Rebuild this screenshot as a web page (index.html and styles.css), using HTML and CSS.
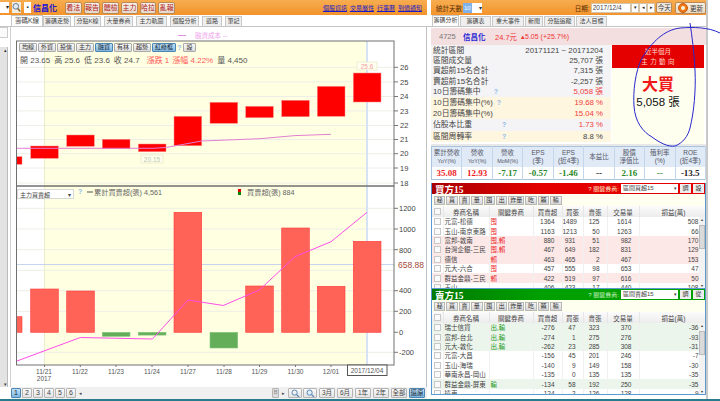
FILE: index.html
```html
<!DOCTYPE html>
<html lang="zh-Hant">
<head>
<meta charset="utf-8">
<title>信昌化 籌碼K線</title>
<link rel="stylesheet" href="styles.css">
</head>
<body>
<div class="page">
  <div class="columns">
    <section class="left">
      <header class="topbar">
        <div class="top-search">
          <span class="stub">▾</span>
          <svg class="search-icon" width="9" height="10" viewBox="0 0 9 10"><circle cx="3.8" cy="3.8" r="2.8" fill="#dfeaf7" stroke="#6b7d92"/><path d="M5.8 6l2.4 3" stroke="#8a6a2a" stroke-width="1.5"/></svg>
          <span class="stub stub-dot">▪</span>
        </div>
        <b class="stock-name">信昌化</b>
        <nav class="top-btns">
          <span class="top-btn">看法</span><span class="top-btn">報告</span><span class="top-btn">體檢</span><span class="top-btn">主力</span><span class="top-btn">哈拉</span><span class="top-btn">亂報</span>
        </nav>
        <nav class="top-links">
          <a>個股資訊</a><a>交易屬性</a><a>行事曆</a><a>到價通知</a>
        </nav>
      </header>
      <div class="tabs tabs-left">
        <span class="tab active">籌碼K線</span><span class="tab">籌碼走勢</span><span class="tab">分點K線</span><span class="tab">大量券商</span><span class="tab">主力軌圖</span><span class="tab">個股分析</span><span class="tab">道路</span><span class="tab">筆記</span>
      </div>
      <div class="work">
        <aside class="strip">
          <span class="strip-box"></span>
          <span class="strip-bar"><i>▴</i><i>▾</i></span>
        </aside>
        <div class="canvas">
          <svg class="chart" width="416" height="356" viewBox="11 27 416 356">
            <rect x="16.5" y="41" width="377.5" height="324" fill="#fff"/>
            <rect x="44.5" y="41" width="322.5" height="324" fill="#ffffe2"/>
            <g class="grid">
              <path d="M17 67.3H394M17 81.9H394M17 96.5H394M17 110.9H394M17 125.5H394M17 139.5H394M17 153.7H394M17 168H394M17 183H394"/>
              <path d="M17 208.3H394M17 229H394M17 249.7H394M17 270.3H394M17 290.7H394M17 311.3H394M17 352.3H394"/>
            </g>
            <path d="M44.5 41V365" stroke="#e9efc8" fill="none"/>
            <path d="M367 41V365" stroke="#d5e3f4" stroke-width="2" fill="none"/>
            <path d="M17 264.5H394" stroke="#c6d5ec" fill="none"/>

            <g class="candles">
              <rect x="16.7" y="156.7" width="5.3" height="7.6"/>
              <rect x="30.7" y="146" width="27.6" height="12.3"/>
              <rect x="66.7" y="135" width="27.6" height="11.3"/>
              <rect x="102.3" y="139.3" width="27.7" height="9.4"/>
              <rect x="138.3" y="144" width="27.7" height="7.7"/>
              <rect x="174" y="116.3" width="27.7" height="29.4"/>
              <rect x="210" y="102.3" width="27.7" height="21"/>
              <rect x="245.7" y="106.3" width="27.6" height="11.4"/>
              <rect x="281.7" y="100.3" width="27.6" height="16.4"/>
              <rect x="317.3" y="86.3" width="27.7" height="30"/>
              <rect x="353.3" y="73" width="27.7" height="29"/>
            </g>
            <polyline class="ma" points="17,148.3 153,148.3 166,147.5 201.7,141 260,138.7 295,135.6 331,134.3"/>

            <g class="tip">
              <rect x="357" y="62" width="20" height="8"/>
              <text x="367" y="68.6">25.6</text>
              <rect x="141" y="155" width="22" height="8"/>
              <text x="152" y="161.6" class="tip-green">20.15</text>
            </g>

            <g class="bars-up">
              <rect x="16.7" y="316.7" width="5.3" height="15.6"/>
              <rect x="30.7" y="289" width="27.6" height="43.3"/>
              <rect x="66.7" y="291" width="27.6" height="41.3"/>
              <rect x="174" y="212.3" width="27.7" height="120"/>
              <rect x="245.7" y="286" width="27.6" height="46.3"/>
              <rect x="281.7" y="228" width="27.6" height="104.3"/>
              <rect x="317.3" y="286.3" width="27.7" height="46"/>
              <rect x="353.3" y="241.3" width="27.7" height="91"/>
            </g>
            <g class="bars-down">
              <rect x="102.3" y="332.3" width="27.7" height="4"/>
              <rect x="138.3" y="332.3" width="27.7" height="2.8"/>
              <rect x="210" y="332.3" width="27.7" height="15.7"/>
            </g>
            <polyline class="cum" points="17,361 80.3,337.5 152.5,339 188,300 223.3,305.5 259.3,290 295,256.7 331,241.7 367,212.3"/>

            <rect x="16.5" y="41" width="377.5" height="145" class="frame"/>
            <rect x="16.5" y="186" width="377.5" height="179" class="frame"/>

            <g class="ticks">
              <path d="M394 67.3h4M394 81.9h4M394 96.5h4M394 110.9h4M394 125.5h4M394 139.5h4M394 153.7h4M394 168h4M394 183h4"/>
              <path d="M394 208.3h4M394 229h4M394 249.7h4M394 290.7h4M394 311.3h4M394 332.3h4M394 352.3h4"/>
              <path d="M44.5 365v2M80.3 365v2M116 365v2M152 365v2M188 365v2M224 365v2M259.5 365v2M295.5 365v2M331 365v2"/>
            </g>
            <g class="axis">
              <text x="400" y="70">26</text><text x="400" y="84.6">25</text><text x="400" y="99">24</text><text x="400" y="113.6">23</text><text x="400" y="128">22</text><text x="400" y="142">21</text><text x="400" y="156.4">20</text><text x="400" y="170.8">19</text><text x="400" y="185.6">18</text>
              <text x="399" y="211">1200</text><text x="399" y="231.8">1000</text><text x="399" y="252.5">800</text><text x="399" y="293.4">400</text><text x="399" y="314">200</text><text x="399" y="335">0</text><text x="399" y="355">-200</text>
              <text x="398" y="268" class="price">658.88</text>
            </g>
            <g class="xaxis">
              <text x="44" y="373.5">11/21</text><text x="44" y="380.5">2017</text>
              <text x="80" y="373.5">11/22</text><text x="116" y="373.5">11/23</text><text x="152" y="373.5">11/24</text><text x="188" y="373.5">11/27</text><text x="224" y="373.5">11/28</text><text x="259.5" y="373.5">11/29</text><text x="295.5" y="373.5">11/30</text><text x="331" y="373.5">12/01</text>
            </g>
            <rect x="347.5" y="365" width="39.5" height="10.5" fill="#fff" stroke="#555"/>
            <text x="367" y="373.2" class="x-date">2017/12/04</text>

            <g class="legend">
              <path d="M178 35.5h8" stroke="#e58be0"/>
              <text x="195" y="38" class="legend-ma">融資成本 --</text>
              <path d="M87 192h6" stroke="#555"/>
              <text x="94" y="195">累計買賣超(張) 4,561</text>
              <rect x="238" y="189" width="3" height="3" fill="#d00"/>
              <rect x="238" y="192" width="3" height="3" fill="#080"/>
              <text x="247" y="195">買賣超(張) 884</text>
            </g>
          </svg>

          <div class="chart-tools">
            <span class="cbtn">均線</span><span class="cbtn">外資</span><span class="cbtn">投信</span><span class="cbtn">主力</span><span class="cbtn on">融資</span><span class="cbtn">有林</span><span class="cbtn">趨勢</span><span class="cbtn on wide">紅綠框</span><i class="help">?</i><span class="cbtn">設</span>
          </div>
          <div class="ohlc">
            <span>開 23.65</span><span>高 25.6</span><span>低 23.6</span><span>收 24.7</span><em>漲跌 1</em><em>漲幅 4.22%</em><span>量 4,450</span>
          </div>
          <div class="chart-select"><span>主力買賣超</span><i>▾</i></div>
          <i class="help help-low">?</i>
        </div>
      </div>
      <footer class="pager">
        <div class="pages">
          <span class="pbtn on">1</span><span class="pbtn">2</span><span class="pbtn">3</span><span class="pbtn">4</span><span class="pbtn">5</span><span class="pbtn">6</span><i class="pmore">◂</i>
        </div>
        <div class="ranges">
          <span class="pbtn small">日</span><i class="pmore">▸</i>
          <span class="pbtn icon"><svg width="9" height="9" viewBox="0 0 9 9"><circle cx="3.6" cy="3.6" r="2.6" fill="none" stroke="#5a88b8"/><path d="M5.6 5.6L8 8" stroke="#5a88b8" stroke-width="1.3"/></svg></span>
          <span class="pbtn icon"><svg width="9" height="9" viewBox="0 0 9 9"><circle cx="3.6" cy="3.6" r="2.6" fill="#e2eefa" stroke="#5a88b8"/><path d="M5.6 5.6L8 8" stroke="#5a88b8" stroke-width="1.3"/></svg></span>
          <span class="pbtn rng">3月</span><span class="pbtn rng">6月</span><span class="pbtn rng">1年</span><span class="pbtn rng">2年</span><span class="pbtn rng">全部</span><span class="pbtn rng on">還原</span>
        </div>
      </footer>
    </section>

    <section class="right">
      <header class="topbar topbar-right">
        <span class="days">統計天數:</span>
        <span class="days-box"><b>10</b><i>▾</i></span>
        <span class="date-label">日期:</span>
        <span class="date-box">2017/12/4</span>
        <span class="date-nav">▾</span><span class="date-nav">◂</span><span class="date-nav">▸</span>
        <span class="today">今天</span>
        <span class="refresh"><svg width="10" height="10" viewBox="0 0 10 10"><circle cx="5" cy="5" r="4.5" fill="#f07a1a" stroke="#c95a08"/><circle cx="5" cy="5" r="2" fill="#fff3d8"/></svg>更新</span>
      </header>
      <div class="tabs tabs-right">
        <span class="tab active">籌碼分析</span><span class="tab">籌碼表</span><span class="tab">重大事件</span><span class="tab">新聞</span><span class="tab">分點追蹤</span><span class="tab">法人目標</span>
      </div>
      <div class="quote">
        <span class="q-code">4725</span><b class="q-name">信昌化</b><span class="q-price">24.7元</span><span class="q-change">▴5.05 (+25.7%)</span>
      </div>
      <div class="summary">
        <table class="stats">
          <tr><td>統計區間</td><td class="v">20171121 ~ 20171204</td></tr>
          <tr><td>區間成交量</td><td class="v">25,707 張</td></tr>
          <tr><td>買超前15名合計</td><td class="v">7,315 張</td></tr>
          <tr><td>賣超前15名合計</td><td class="v">-2,257 張</td></tr>
          <tr><td>10日籌碼集中<i class="help gap-a">?</i></td><td class="v red">5,058 張</td></tr>
          <tr class="cream tall"><td>10日籌碼集中(%)<i class="help gap-b">?</i></td><td class="v red">19.68 %</td></tr>
          <tr class="cream tall"><td>20日籌碼集中(%)</td><td class="v red">15.04 %</td></tr>
          <tr class="tall"><td>佔股本比重<i class="help gap-c">?</i></td><td class="v red">1.73 %</td></tr>
          <tr class="cream tall"><td>區間周轉率<i class="help gap-c">?</i></td><td class="v">8.8 %</td></tr>
        </table>
        <div class="force">
          <div class="force-head"><span>近半個月</span><span class="spaced">主 力 動 向</span></div>
          <div class="force-body"><b>大買</b><span>5,058 張</span></div>
        </div>
      </div>
      <table class="metrics">
        <tr class="m-head">
          <th>累計營收<br><small>YoY(%)</small></th><th>營收<br><small>YoY(%)</small></th><th>營收<br><small>MoM(%)</small></th><th>EPS<br>(季)</th><th>EPS<br>(近4季)</th><th>本益比</th><th>股價<br>淨值比</th><th>殖利率<br>(%)</th><th>ROE<br>(近4季)</th>
        </tr>
        <tr class="m-val">
          <td class="up">35.08</td><td class="up">12.93</td><td class="down">-7.17</td><td class="down">-0.57</td><td class="down">-1.46</td><td>--</td><td class="down">2.16</td><td class="down">--</td><td>-13.5</td>
        </tr>
      </table>

      <div class="broker buy">
        <div class="b-head">
          <b>買方15</b>
          <span class="b-ctrl"><i>?</i> 關鍵券商:</span>
          <span class="b-select">區間買超15<i>▾</i></span>
          <span class="b-btn">調</span><span class="b-btn">設</span>
        </div>
        <div class="b-tools"><span>秘</span><span>買</span><span>賣</span><span>量</span><span>囤</span><span>出</span><span class="w">炸量</span><span>吃</span><span>賴</span><span>輸</span></div>
        <table class="b-table">
          <colgroup><col class="c0"><col class="c1"><col class="c2"><col class="c3"><col class="c4"><col class="c5"><col class="c6"><col class="c7"></colgroup>
          <tr class="hd"><th><u></u></th><th>券商名稱</th><th>關鍵券商</th><th>買賣超</th><th>買張</th><th>賣張</th><th>交易量</th><th>損益(萬)</th></tr>
          <tr><td><u></u></td><td>元富-松德</td><td class="tag r">囤</td><td>1364</td><td>1489</td><td>125</td><td>1614</td><td>508</td></tr>
          <tr><td><u></u></td><td>玉山-南京東路</td><td class="tag r">囤</td><td>1163</td><td>1213</td><td>50</td><td>1263</td><td>66</td></tr>
          <tr class="pink"><td><u></u></td><td>富邦-敦南</td><td class="tag r">囤,賴</td><td>880</td><td>931</td><td>51</td><td>982</td><td>170</td></tr>
          <tr class="pink"><td><u></u></td><td>台灣企銀-三民</td><td class="tag r">囤,賴</td><td>467</td><td>649</td><td>182</td><td>831</td><td>129</td></tr>
          <tr class="pink"><td><u></u></td><td>德信</td><td class="tag r">賴</td><td>463</td><td>465</td><td>2</td><td>467</td><td>153</td></tr>
          <tr><td><u></u></td><td>元大-六合</td><td class="tag r">囤</td><td>457</td><td>555</td><td>98</td><td>653</td><td>47</td></tr>
          <tr class="pink"><td><u></u></td><td>群益金鼎-三民</td><td class="tag r">賴</td><td>422</td><td>519</td><td>97</td><td>616</td><td>50</td></tr>
          <tr><td><u></u></td><td>玉山</td><td class="tag r"></td><td>406</td><td>423</td><td>17</td><td>440</td><td>108</td></tr>
        </table>
        <span class="scroll"><i>▴</i><em></em><i>▾</i></span>
      </div>

      <div class="broker sell">
        <div class="b-head">
          <b>賣方15</b>
          <span class="b-ctrl"><i>?</i> 關鍵券商:</span>
          <span class="b-select">區間賣超15<i>▾</i></span>
          <span class="b-btn">調</span><span class="b-btn">從</span>
        </div>
        <div class="b-tools"><span>秘</span><span>買</span><span>賣</span><span>量</span><span>囤</span><span>出</span><span class="w">炸量</span><span>吃</span><span>賴</span><span>輸</span></div>
        <table class="b-table">
          <colgroup><col class="c0"><col class="c1"><col class="c2"><col class="c3"><col class="c4"><col class="c5"><col class="c6"><col class="c7"></colgroup>
          <tr class="hd"><th><u></u></th><th>券商名稱</th><th>關鍵券商</th><th>買賣超</th><th>買張</th><th>賣張</th><th>交易量</th><th>損益(萬)</th></tr>
          <tr class="mint"><td><u></u></td><td>瑞士信貸</td><td class="tag g">出,輸</td><td>-276</td><td>47</td><td>323</td><td>370</td><td>-36</td></tr>
          <tr class="mint"><td><u></u></td><td>富邦-台北</td><td class="tag g">出,輸</td><td>-274</td><td>1</td><td>275</td><td>276</td><td>-93</td></tr>
          <tr class="mint"><td><u></u></td><td>元大-敦化</td><td class="tag g">出,輸</td><td>-262</td><td>23</td><td>285</td><td>308</td><td>-31</td></tr>
          <tr><td><u></u></td><td>元富-大昌</td><td class="tag g"></td><td>-156</td><td>45</td><td>201</td><td>246</td><td>-7</td></tr>
          <tr><td><u></u></td><td>玉山-海瑞</td><td class="tag g"></td><td>-140</td><td>9</td><td>149</td><td>158</td><td>-30</td></tr>
          <tr><td><u></u></td><td>華南永昌-岡山</td><td class="tag g"></td><td>-135</td><td>0</td><td>135</td><td>135</td><td>-35</td></tr>
          <tr class="mint"><td><u></u></td><td>群益金鼎-屏東</td><td class="tag g">輸</td><td>-134</td><td>58</td><td>192</td><td>250</td><td>-35</td></tr>
          <tr><td><u></u></td><td>遠東</td><td class="tag g"></td><td>-124</td><td>2</td><td>126</td><td>128</td><td>-9</td></tr>
        </table>
        <span class="scroll"><i>▴</i><em></em><i>▾</i></span>
      </div>
    </section>
  </div>
  <div class="taskbar"></div>
  <svg class="ink" width="720" height="401" viewBox="0 0 720 401"><path d="M720 33C708 27 694 27 680 28C664 30 652 42 642 58C635 72 633 92 634 106C635 122 643 132 652 137C660 143 668 147 675 146C683 143 688 136 690 128C694 112 696 90 695 70C694 52 692 36 690 23"/></svg>
</div>
</body>
</html>
```
FILE: styles.css
```css
* { box-sizing: border-box; }
html, body { margin: 0; padding: 0; }
body {
  width: 720px; height: 401px; overflow: hidden; background: #fff; color: #444;
  font-family: "Liberation Sans", "Noto Sans CJK TC", sans-serif; font-size: 8px;
}
i, em { font-style: normal; }
.page { position: relative; width: 720px; height: 401px; display: flex; flex-direction: column; }
.columns { display: flex; height: 399px; }
.left { width: 431px; display: flex; flex-direction: column; flex: none; }
.right { width: 277px; flex: none; margin-left: 0; border-right: 2px solid #c9c9c9; display: flex; flex-direction: column; }
.taskbar { height: 2px; background: #2a7b8c; }

.topbar {
  height: 15px; flex: none; display: flex; align-items: center; width: 427px;
  background: linear-gradient(#f7ad50, #f2932c);
}
.top-search { display: flex; align-items: center; gap: 3px; width: 33px; }
.stub { width: 9px; height: 11px; background: #fff; font-size: 6px; line-height: 11px; text-align: right; color: #222; }
.search-icon { background: #f0ece2; width: 9px; height: 11px; }
.stub-dot { width: 7px; text-align: center; }
.stock-name { width: 32px; color: #1414d8; font-size: 8px; white-space: nowrap; }
.top-btns { display: flex; gap: 2px; }
.top-btn {
  width: 16.7px; height: 12px; border: 1px solid #b88a5a; border-radius: 2px; background: linear-gradient(#f6efe6, #e5dacb);
  color: #b01818; font-size: 7px; line-height: 10px; text-align: center; white-space: nowrap;
}
.top-links { margin-left: auto; margin-right: 5px; display: flex; gap: 3px; }
.top-links a { color: #1a1ac8; text-decoration: underline; font-size: 6px; white-space: nowrap; }

.tabs { height: 12px; flex: none; display: flex; align-items: flex-end; border-bottom: 1px solid #c4c4c4; }
.tab {
  height: 10px; border: 1px solid #c8c8c8; border-bottom: none; background: #efefef;
  font-size: 6px; line-height: 9px; text-align: center; color: #444; white-space: nowrap; overflow: hidden;
}
.tab.active { background: #fff; height: 11px; }
.tabs-left { padding-left: 11px; gap: 3px; }
.tabs-left .tab { width: 28px; }
.tabs-left .tab:nth-child(1) { width: 32px; font-size: 6.5px; margin-right: -3px; }
.tabs-left .tab:nth-child(3) { width: 27px; }
.tabs-left .tab:nth-child(4) { width: 29px; }
.tabs-left .tab:nth-child(5) { width: 31px; }
.tabs-left .tab:nth-child(6) { width: 29px; }
.tabs-left .tab:nth-child(7) { width: 20px; }
.tabs-left .tab:nth-child(8) { width: 17px; }
.tabs-right { padding-left: 1px; width: 100%; gap: 1px; }
.tabs-right .tab { width: 31px; }
.tabs-right .tab:nth-child(1) { width: 27px; }
.tabs-right .tab:nth-child(3) { width: 32px; }
.tabs-right .tab:nth-child(4) { width: 18px; }

.work { flex: 1; display: flex; min-height: 0; }
.strip { width: 11px; flex: none; display: flex; flex-direction: column; border-right: 1px solid #d0d0d0; background: #fff; }
.strip-box { width: 8px; height: 11px; margin-bottom: 9px; border: 1px solid #ccc; border-left: none; background: #fafafa; }
.strip-bar { flex: 1; width: 8px; background: #e3e3e3; border-right: 1px solid #bbb; display: flex; flex-direction: column; justify-content: space-between; font-size: 5px; color: #333; text-align: right; }
.canvas { position: relative; width: 416px; border-right: 1px solid #c0c0c0; }
.chart { display: block; font-family: "Liberation Sans", "Noto Sans CJK TC", sans-serif; }
.grid path { stroke: #eeeee8; fill: none; }
.frame { fill: none; stroke: #707070; }
.candles rect { fill: #fe0000; stroke: #fb8a8a; stroke-width: .5; }
.ma { fill: none; stroke: #e37fd2; stroke-width: 1; }
.cum { fill: none; stroke: #ff4de8; stroke-width: 1; }
.bars-up rect { fill: #ff6357; stroke: #ff3a3a; stroke-width: .6; }
.bars-down rect { fill: #64ae5a; stroke: #84c67c; stroke-width: .6; }
.tip rect { fill: #fffff0; stroke: #e9e5c4; stroke-width: .7; }
.tip text { font-size: 6.5px; fill: #f6a0a0; text-anchor: middle; }
.tip .tip-green { fill: #b9c8a8; }
.ticks path { stroke: #777; fill: none; }
.axis text { font-size: 7.5px; fill: #444; }
.axis .price { font-size: 8.5px; fill: #a44a3c; }
.xaxis text, .x-date { font-size: 6.5px; fill: #555; text-anchor: middle; }
.legend text { font-size: 7.2px; fill: #666; }
.legend .legend-ma { fill: #ef9fea; font-size: 6.5px; }

.chart-tools { position: absolute; left: 8px; top: 16px; display: flex; gap: 1px; align-items: center; }
.cbtn {
  width: 18px; height: 9px; border: 1px solid #aaa; border-radius: 1px; background: linear-gradient(#f9f9f9, #dcdcdc);
  font-size: 6px; line-height: 7px; text-align: center; color: #333; white-space: nowrap;
}
.cbtn.on { background: linear-gradient(#bfe0f5, #7fb7de); border-color: #4d86b4; color: #123; }
.cbtn.wide { width: 24px; }
.cbtn:last-child { width: 13px; }
.help { color: #8fb8e8; font-size: 7px; font-weight: bold; }
.chart-tools .help { width: 5px; text-align: center; }
.ohlc { position: absolute; left: 9px; top: 27px; display: flex; font-size: 8px; color: #555; white-space: nowrap; }
.ohlc span { margin-right: 4px; }
.ohlc em { color: #ff5a5a; margin-left: 3px; }
.ohlc em + span { margin-left: 4px; }
.chart-select {
  position: absolute; left: 6px; top: 162px; width: 57px; height: 10px; background: #fff; border: 1px solid #d8d8d8;
  display: flex; justify-content: space-between; align-items: center; font-size: 6px; padding: 0 2px; color: #444;
}
.chart-select i { font-size: 6px; }
.help-low { position: absolute; left: 67px; top: 161px; }

.pager { height: 12px; flex: none; margin-left: 11px; width: 416px; display: flex; justify-content: space-between; align-items: center; background: #f0f0f0; padding-right: 2px; }
.pages, .ranges { display: flex; gap: 1px; align-items: center; }
.pbtn {
  width: 10px; height: 10px; border: 1px solid #b5b5b5; border-radius: 1px; background: linear-gradient(#fafafa, #e4e4e4);
  font-size: 7px; line-height: 8px; text-align: center; color: #444; white-space: nowrap; overflow: hidden; display: block;
}
.pbtn.on { background: linear-gradient(#c2e2f7, #7db6dd); border-color: #4d86b4; color: #123; }
.pbtn.small { width: 7px; font-size: 4px; background: #ddd; }
.pbtn.icon { width: 14px; display: flex; align-items: center; justify-content: center; }
.pbtn.rng { width: 16px; font-size: 6.5px; margin-left: 1px; }
.pmore { font-size: 5px; width: 7px; text-align: center; color: #444; }

.topbar-right { width: 100%; background: linear-gradient(#f7ad50, #f2932c); padding-left: 5px; color: #55300a; font-size: 6.5px; white-space: nowrap; }
.days { width: 27px; }
.days-box { width: 19px; height: 10px; background: #fff; display: flex; justify-content: space-between; font-size: 6px; line-height: 10px; color: #333; }
.days-box b { background: #7fb2ea; color: #fff; font-weight: normal; padding: 0 1px; }
.date-label { margin-left: 93px; width: 16px; color: #5a2c00; }
.date-box { width: 41px; height: 10px; background: #fff; border: 1px solid #d6c4a8; font-size: 6.5px; line-height: 8px; padding-left: 1px; color: #444; }
.date-nav { width: 8px; height: 10px; background: #fff; border: 1px solid #d6c4a8; font-size: 4.5px; line-height: 8px; text-align: center; color: #222; }
.today { width: 16px; height: 11px; margin-left: 1px; border: 1px solid #b88a5a; border-radius: 2px; background: #efe6da; font-size: 6.5px; line-height: 9px; text-align: center; color: #444; }
.refresh { width: 31px; height: 12px; margin-left: 3px; border: 1px solid #b88a5a; border-radius: 2px; background: linear-gradient(#f6eee2, #ecd9c0); font-size: 6.5px; display: flex; align-items: center; justify-content: center; gap: 2px; color: #444; }

.quote { height: 17px; flex: none; margin-top: 1px; background: #f4dfe0; display: flex; align-items: center; padding-left: 8px; font-size: 7.5px; white-space: nowrap; }
.q-code { color: #777; width: 24px; }
.q-name { color: #1f1fd8; width: 32px; }
.q-price { color: #f03232; width: 26px; }
.q-change { color: #f03232; font-size: 7px; }

.summary { height: 101px; flex: none; display: flex; gap: 1px; border-bottom: 2px solid #e8e8e8; padding-right: 2px; }
.stats { width: 180px; height: 97px; border-collapse: collapse; font-size: 7.8px; color: #444; }
.stats td { padding: 0 0 0 2px; height: 10px; line-height: 9px; background: #f4f4f6; white-space: nowrap; }
.stats .tall td { height: 11px; }
.stats .cream td { background: #fff6e0; }
.stats .v { text-align: right; padding-right: 8px; }
.stats .red { color: #f03c3c; }
.gap-a { margin-left: 13px; }
.gap-b { margin-left: 4px; }
.gap-c { margin-left: 30px; }
.force { flex: 1; display: flex; flex-direction: column; background: #fffff0; }
.force-head { height: 23px; background: #e50000; color: #ffd9c8; font-size: 6.5px; display: flex; flex-direction: column; align-items: center; justify-content: center; gap: 1px; line-height: 9px; }
.spaced { letter-spacing: .3px; }
.force-body { flex: 1; display: flex; flex-direction: column; align-items: center; padding-top: 8px; }
.force-body b { color: #f01818; font-size: 16px; font-weight: bold; line-height: 18px; }
.force-body span { color: #111; font-size: 11.5px; line-height: 16px; white-space: nowrap; }

.metrics { width: 100%; height: 34px; flex: none; table-layout: fixed; border-collapse: collapse; border: 1px solid #a9c3de; }
.metrics th, .metrics td { border-right: 1px solid #c3d6ea; padding: 0; text-align: center; overflow: hidden; }
.m-head th { height: 20px; background: #dfeaf6; font-weight: normal; font-size: 6.5px; line-height: 8px; color: #556; }
.m-head small { font-size: 5.5px; }
.m-val td { height: 13px; font-family: "Liberation Serif", serif; font-weight: bold; font-size: 9px; color: #222; background: #fff; }
.m-val .up { color: #ee1c25; }
.m-val .down { color: #2c8b2c; }

.broker { position: relative; flex: none; margin-top: 3px; overflow: hidden; }
.buy { height: 106px; border: 1px solid #5a9ad0; border-top: none; }
.sell { height: 106px; margin-top: 0; border: 1px solid #5a9ad0; border-top: none; }
.b-head { height: 11px; display: flex; align-items: center; color: #fff; padding-right: 1px; }
.buy .b-head { background: linear-gradient(90deg, #a80000, #e40000 40%); }
.sell .b-head { background: linear-gradient(90deg, #007a00, #00a000 40%); }
.b-head b { font-family: "Liberation Serif", "Noto Sans CJK TC", serif; font-size: 9.5px; padding-left: 3px; margin-right: auto; white-space: nowrap; }
.b-ctrl { font-size: 6px; color: #ffe7c8; margin-right: 2px; white-space: nowrap; }
.sell .b-ctrl { color: #c8f0c0; }
.b-select { width: 57px; height: 9px; background: #fff; color: #444; font-size: 6px; line-height: 9px; padding-left: 2px; display: flex; justify-content: space-between; white-space: nowrap; }
.b-select i { font-size: 5px; padding-right: 1px; }
.b-btn { width: 11px; height: 9px; margin-left: 2px; background: #eee; color: #333; font-size: 6px; line-height: 9px; text-align: center; }
.b-tools { height: 12px; display: flex; gap: 1px; align-items: center; background: #fffff0; padding-left: 2px; }
.b-tools span { width: 11.4px; height: 9px; border: 1px solid #b8b8b8; background: linear-gradient(#f4f4f4, #d8d8d8); font-size: 6px; line-height: 7px; text-align: center; color: #333; white-space: nowrap; }
.b-tools .w { width: 16px; }
.b-table { width: 276px; table-layout: fixed; border-collapse: collapse; font-size: 6.5px; color: #444; }
.c0 { width: 11px; } .c1 { width: 46px; } .c2 { width: 44px; } .c3 { width: 29px; } .c4 { width: 21px; } .c5 { width: 24px; } .c6 { width: 32px; } .c7 { width: 69px; }
.b-table th { height: 11px; padding: 0; font-weight: normal; background: linear-gradient(#fbfbfb, #ececec); border-right: 1px solid #e6e6e6; text-align: center; font-size: 6.5px; overflow: hidden; }
.b-table td { height: 9.4px; padding: 0 7px 0 0; line-height: 9px; text-align: right; white-space: nowrap; overflow: hidden; border-right: 1px solid #f0f0f0; background: #fff; }
.b-table td:nth-child(1), .b-table td:nth-child(2), .b-table td:nth-child(3) { text-align: left; padding: 0 0 0 1px; }
.b-table td:last-child { padding-right: 9px; }
.b-table u { display: block; width: 7px; height: 7px; margin: 0 auto; background: #fafafa; border: 1px solid #c8c8c8; text-decoration: none; }
.pink td { background: #fde8e8; }
.mint td { background: #ecf5ec; }
.tag.r { color: #ec2b2b; }
.tag.g { color: #1f9a1f; }
.scroll { position: absolute; right: 0; top: 34px; width: 6px; bottom: 0; background: #f2f2f2; display: flex; flex-direction: column; justify-content: space-between; align-items: center; font-size: 4px; color: #333; }
.scroll em { position: absolute; top: 8px; left: 0; width: 6px; height: 24px; background: #dadada; border: 1px solid #bbb; }
.ink { position: absolute; left: 0; top: 0; pointer-events: none; }
.ink path { fill: none; stroke: #2727cf; stroke-width: 1; }
```
